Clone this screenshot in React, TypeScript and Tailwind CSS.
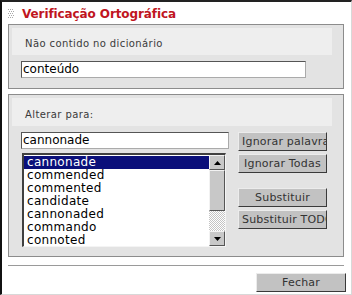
import React from "react";

const suggestions = [
  "cannonade",
  "commended",
  "commented",
  "candidate",
  "cannonaded",
  "commando",
  "connoted",
];

const font = "font-['DejaVu_Sans',Verdana,sans-serif]";

const Button = ({ label, className = "" }: { label: string; className?: string }) => (
  <div
    className={`h-[19px] overflow-hidden whitespace-nowrap bg-[#c2c2c2] border border-t-[#ececec] border-l-[#ececec] border-b-[#3a3a3a] border-r-[#3a3a3a] text-[11px] leading-[17px] tracking-[0.2px] text-[#333] ${className}`}
  >
    {label}
  </div>
);

const Arrow = ({ up }: { up?: boolean }) => (
  <div className="h-[15px] w-[16px] flex items-center justify-center bg-[#c8c8c8] border border-t-[#f2f2f2] border-l-[#f2f2f2] border-b-[#555] border-r-[#555]">
    <svg width="7" height="4" viewBox="0 0 7 4">
      <path d={up ? "M3.5 0L7 4H0Z" : "M0 0H7L3.5 4Z"} fill="#000" />
    </svg>
  </div>
);

export default function App() {
  return (
    <div
      className={`${font} w-[352px] h-[295px] bg-white border-t-2 border-l-2 border-t-[#222] border-l-[#111] border-r border-b border-r-[#d8d8d8] border-b-[#d8d8d8] overflow-hidden`}
    >
      {/* title */}
      <div className="h-[22px] flex items-center pl-[6px] pt-[1px]">
        <svg width="7" height="9" viewBox="0 0 7 9" className="mr-[7px]">
          {[0, 2, 4, 6, 8].map((y) =>
            [0, 2, 4].map((x) => (
              <rect key={`${x}-${y}`} x={x + (y % 4 === 0 ? 0 : 1)} y={y} width="1" height="1" fill="#a8a8a8" />
            ))
          )}
        </svg>
        <span className="text-[12px] font-bold text-[#c0151e] tracking-[-0.1px]">Verificação Ortográfica</span>
      </div>

      {/* section 1 */}
      <div className="ml-[6px] w-[336px] h-[65px] border border-[#8c8c8c] bg-[#e3e3e3] p-[3px]">
        <div className="w-[320px] h-[27px] bg-[#eeeeee] pl-[13px] pt-[8px] text-[10px] tracking-[0.4px] text-[#3a3a3a]">
          Não contido no dicionário
        </div>
        <div className="mt-[6px] ml-[9px] w-[285px] h-[17px] bg-white border border-[#555] border-r-[#aaa] border-b-[#aaa] pl-[1px] text-[12px] leading-[15px] text-black">
          conteúdo
        </div>
      </div>

      {/* section 2 */}
      <div className="mt-[5px] ml-[6px] w-[336px] h-[163px] border border-[#8c8c8c] bg-[#e3e3e3] p-[3px]">
        <div className="w-[320px] h-[28px] bg-[#eeeeee] pl-[13px] pt-[9px] text-[10px] tracking-[0.4px] text-[#3a3a3a]">
          Alterar para:
        </div>
        <div className="flex mt-[6px] ml-[9px]">
          <div className="flex flex-col">
            <div className="w-[208px] h-[17px] bg-white border border-[#555] border-r-[#aaa] border-b-[#aaa] pl-[1px] text-[12px] leading-[15px] text-black">
              cannonade
            </div>
            <div className="mt-[4px] ml-[1px] w-[204px] h-[94px] flex bg-white border-t-2 border-l-2 border-t-[#404040] border-l-[#404040] border-r border-b border-r-[#f4f4f4] border-b-[#f4f4f4]">
              <div className="flex-1 pt-[1px]">
                {suggestions.map((s, i) => (
                  <div
                    key={s}
                    className={`h-[13px] pl-[3px] text-[12px] leading-[13px] tracking-[0.3px] ${
                      i === 0 ? "bg-[#0a0f7a] text-white" : "text-black"
                    }`}
                  >
                    {s}
                  </div>
                ))}
              </div>
              <div className="w-[16px] flex flex-col">
                <Arrow up />
                <div className="h-[41px] bg-[#c8c8c8] border border-t-[#f2f2f2] border-l-[#f2f2f2] border-b-[#555] border-r-[#555]" />
                <div className="flex-1 bg-[repeating-conic-gradient(#ffffff_0%_25%,#c4c4c4_0%_50%)] bg-[length:2px_2px]" />
                <Arrow />
              </div>
            </div>
          </div>
          <div className="ml-[9px] w-[89px] flex flex-col gap-[3px]">
            <Button label="Ignorar palavra" className="pl-[3px]" />
            <Button label="Ignorar Todas" className="pl-[5px]" />
            <Button label="Substituir" className="mt-[12px] text-center" />
            <Button label="Substituir TODOS" className="pl-[3px]" />
          </div>
        </div>
      </div>

      {/* separator */}
      <div className="mt-[8px] ml-[6px] w-[336px] h-px bg-[#9a9a9a]" />

      <div className="flex justify-end pr-[5px] mt-[7px]">
        <Button label="Fechar" className="w-[90px] h-[18px] text-center" />
      </div>
    </div>
  );
}
